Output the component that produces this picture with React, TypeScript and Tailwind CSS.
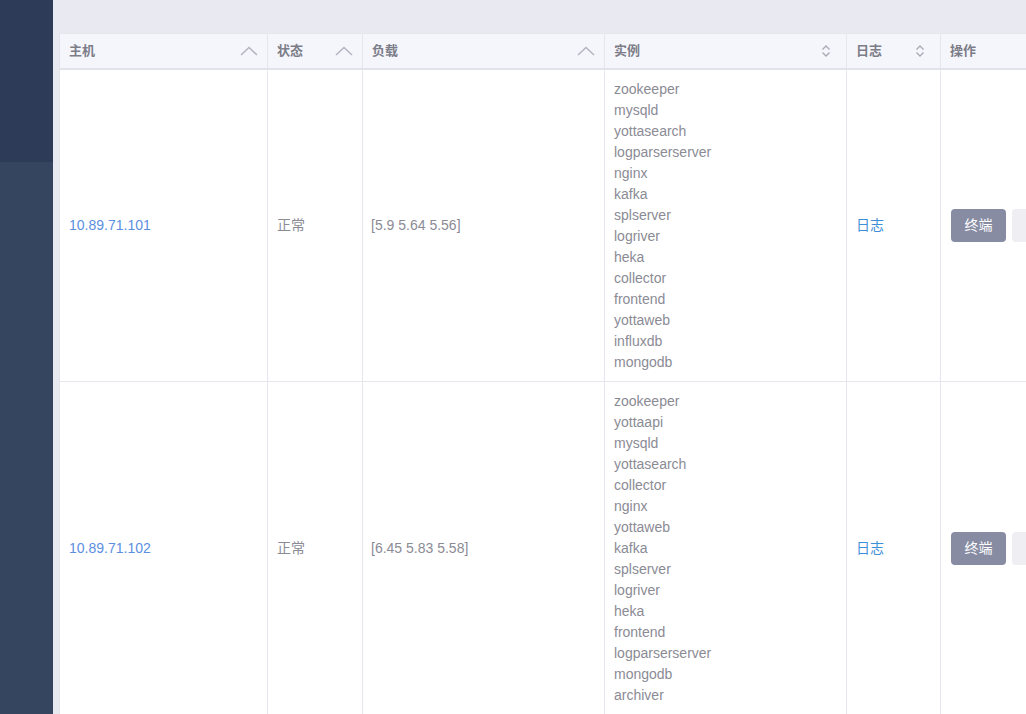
import React from "react";

const rows = [
  {
    host: "10.89.71.101",
    status: "正常",
    load: "[5.9 5.64 5.56]",
    inst: ["zookeeper","mysqld","yottasearch","logparserserver","nginx","kafka","splserver","logriver","heka","collector","frontend","yottaweb","influxdb","mongodb"],
  },
  {
    host: "10.89.71.102",
    status: "正常",
    load: "[6.45 5.83 5.58]",
    inst: ["zookeeper","yottaapi","mysqld","yottasearch","collector","nginx","yottaweb","kafka","splserver","logriver","heka","frontend","logparserserver","mongodb","archiver"],
  },
];

const ChevUp = () => (
  <svg width="18" height="10" viewBox="0 0 18 10" fill="none">
    <path d="M1 9 L9 1.5 L17 9" stroke="#b4b6c0" strokeWidth="1.6" />
  </svg>
);
const UpDown = () => (
  <svg width="10" height="14" viewBox="0 0 10 14" fill="none">
    <path d="M1.5 5.5 L5 2 L8.5 5.5" stroke="#a9abb6" strokeWidth="1.4" />
    <path d="M1.5 8.5 L5 12 L8.5 8.5" stroke="#a9abb6" strokeWidth="1.4" />
  </svg>
);

const font = { fontFamily: '"Liberation Sans", Arial, "Noto Sans CJK SC", sans-serif' };

export default function App() {
  return (
    <div className="flex w-[1026px] h-[714px] overflow-hidden bg-[#e9e9f2]" style={font}>
      <div className="w-[53px] shrink-0 flex flex-col">
        <div className="h-[162px] bg-[#2d3b59]" />
        <div className="flex-1 bg-[#36455f]" />
      </div>
      <div className="flex-1 pl-[6px] pt-[33px] overflow-hidden">
        <div className="w-[1100px] bg-white border-l border-[#e4e4ec]">
          <div className="flex h-[37px] bg-[#f5f6fc] border-t border-[#e6e6ee] border-b-2 border-b-[#e2e2ea] text-[13px] font-semibold text-[#7c7d88]">
            <div className="w-[208px] flex items-center justify-between pl-[9px] pr-[9px] border-r border-[#e6e6ee]">
              <span>主机</span><ChevUp />
            </div>
            <div className="w-[95px] flex items-center justify-between pl-[9px] pr-[9px] border-r border-[#e6e6ee]">
              <span>状态</span><ChevUp />
            </div>
            <div className="w-[242px] flex items-center justify-between pl-[9px] pr-[9px] border-r border-[#e6e6ee]">
              <span>负载</span><ChevUp />
            </div>
            <div className="w-[242px] flex items-center justify-between pl-[9px] pr-[15px] border-r border-[#e6e6ee]">
              <span>实例</span><UpDown />
            </div>
            <div className="w-[94px] flex items-center justify-between pl-[9px] pr-[15px] border-r border-[#e6e6ee]">
              <span>日志</span><UpDown />
            </div>
            <div className="w-[150px] flex items-center pl-[9px]">
              <span>操作</span>
            </div>
          </div>
          {rows.map((r, i) => (
            <div key={i} className="flex border-b border-[#e6e6ee] text-[14px] text-[#8b8b95]">
              <div className="w-[208px] flex items-center pl-[9px] border-r border-[#e6e6ee] text-[#5b8fe0]">{r.host}</div>
              <div className="w-[95px] flex items-center pl-[9px] border-r border-[#e6e6ee]">{r.status}</div>
              <div className="w-[242px] flex items-center pl-[8px] border-r border-[#e6e6ee]">{r.load}</div>
              <div className="w-[242px] flex flex-col pt-[9px] pb-[8px] pl-[9px] border-r border-[#e6e6ee] leading-[21px]">
                {r.inst.map((s) => (<span key={s}>{s}</span>))}
              </div>
              <div className="w-[94px] flex items-center pl-[9px] border-r border-[#e6e6ee] text-[#3f8fd8]">日志</div>
              <div className="w-[150px] flex items-center pl-[10px] gap-[6px]">
                <div className="w-[55px] h-[33px] rounded-[4px] bg-[#878ca3] text-white flex items-center justify-center">终端</div>
                <div className="w-[55px] h-[33px] rounded-[4px] bg-[#efeff3] text-[#e0e0e6] flex items-center justify-center">重启</div>
              </div>
            </div>
          ))}
        </div>
      </div>
    </div>
  );
}
